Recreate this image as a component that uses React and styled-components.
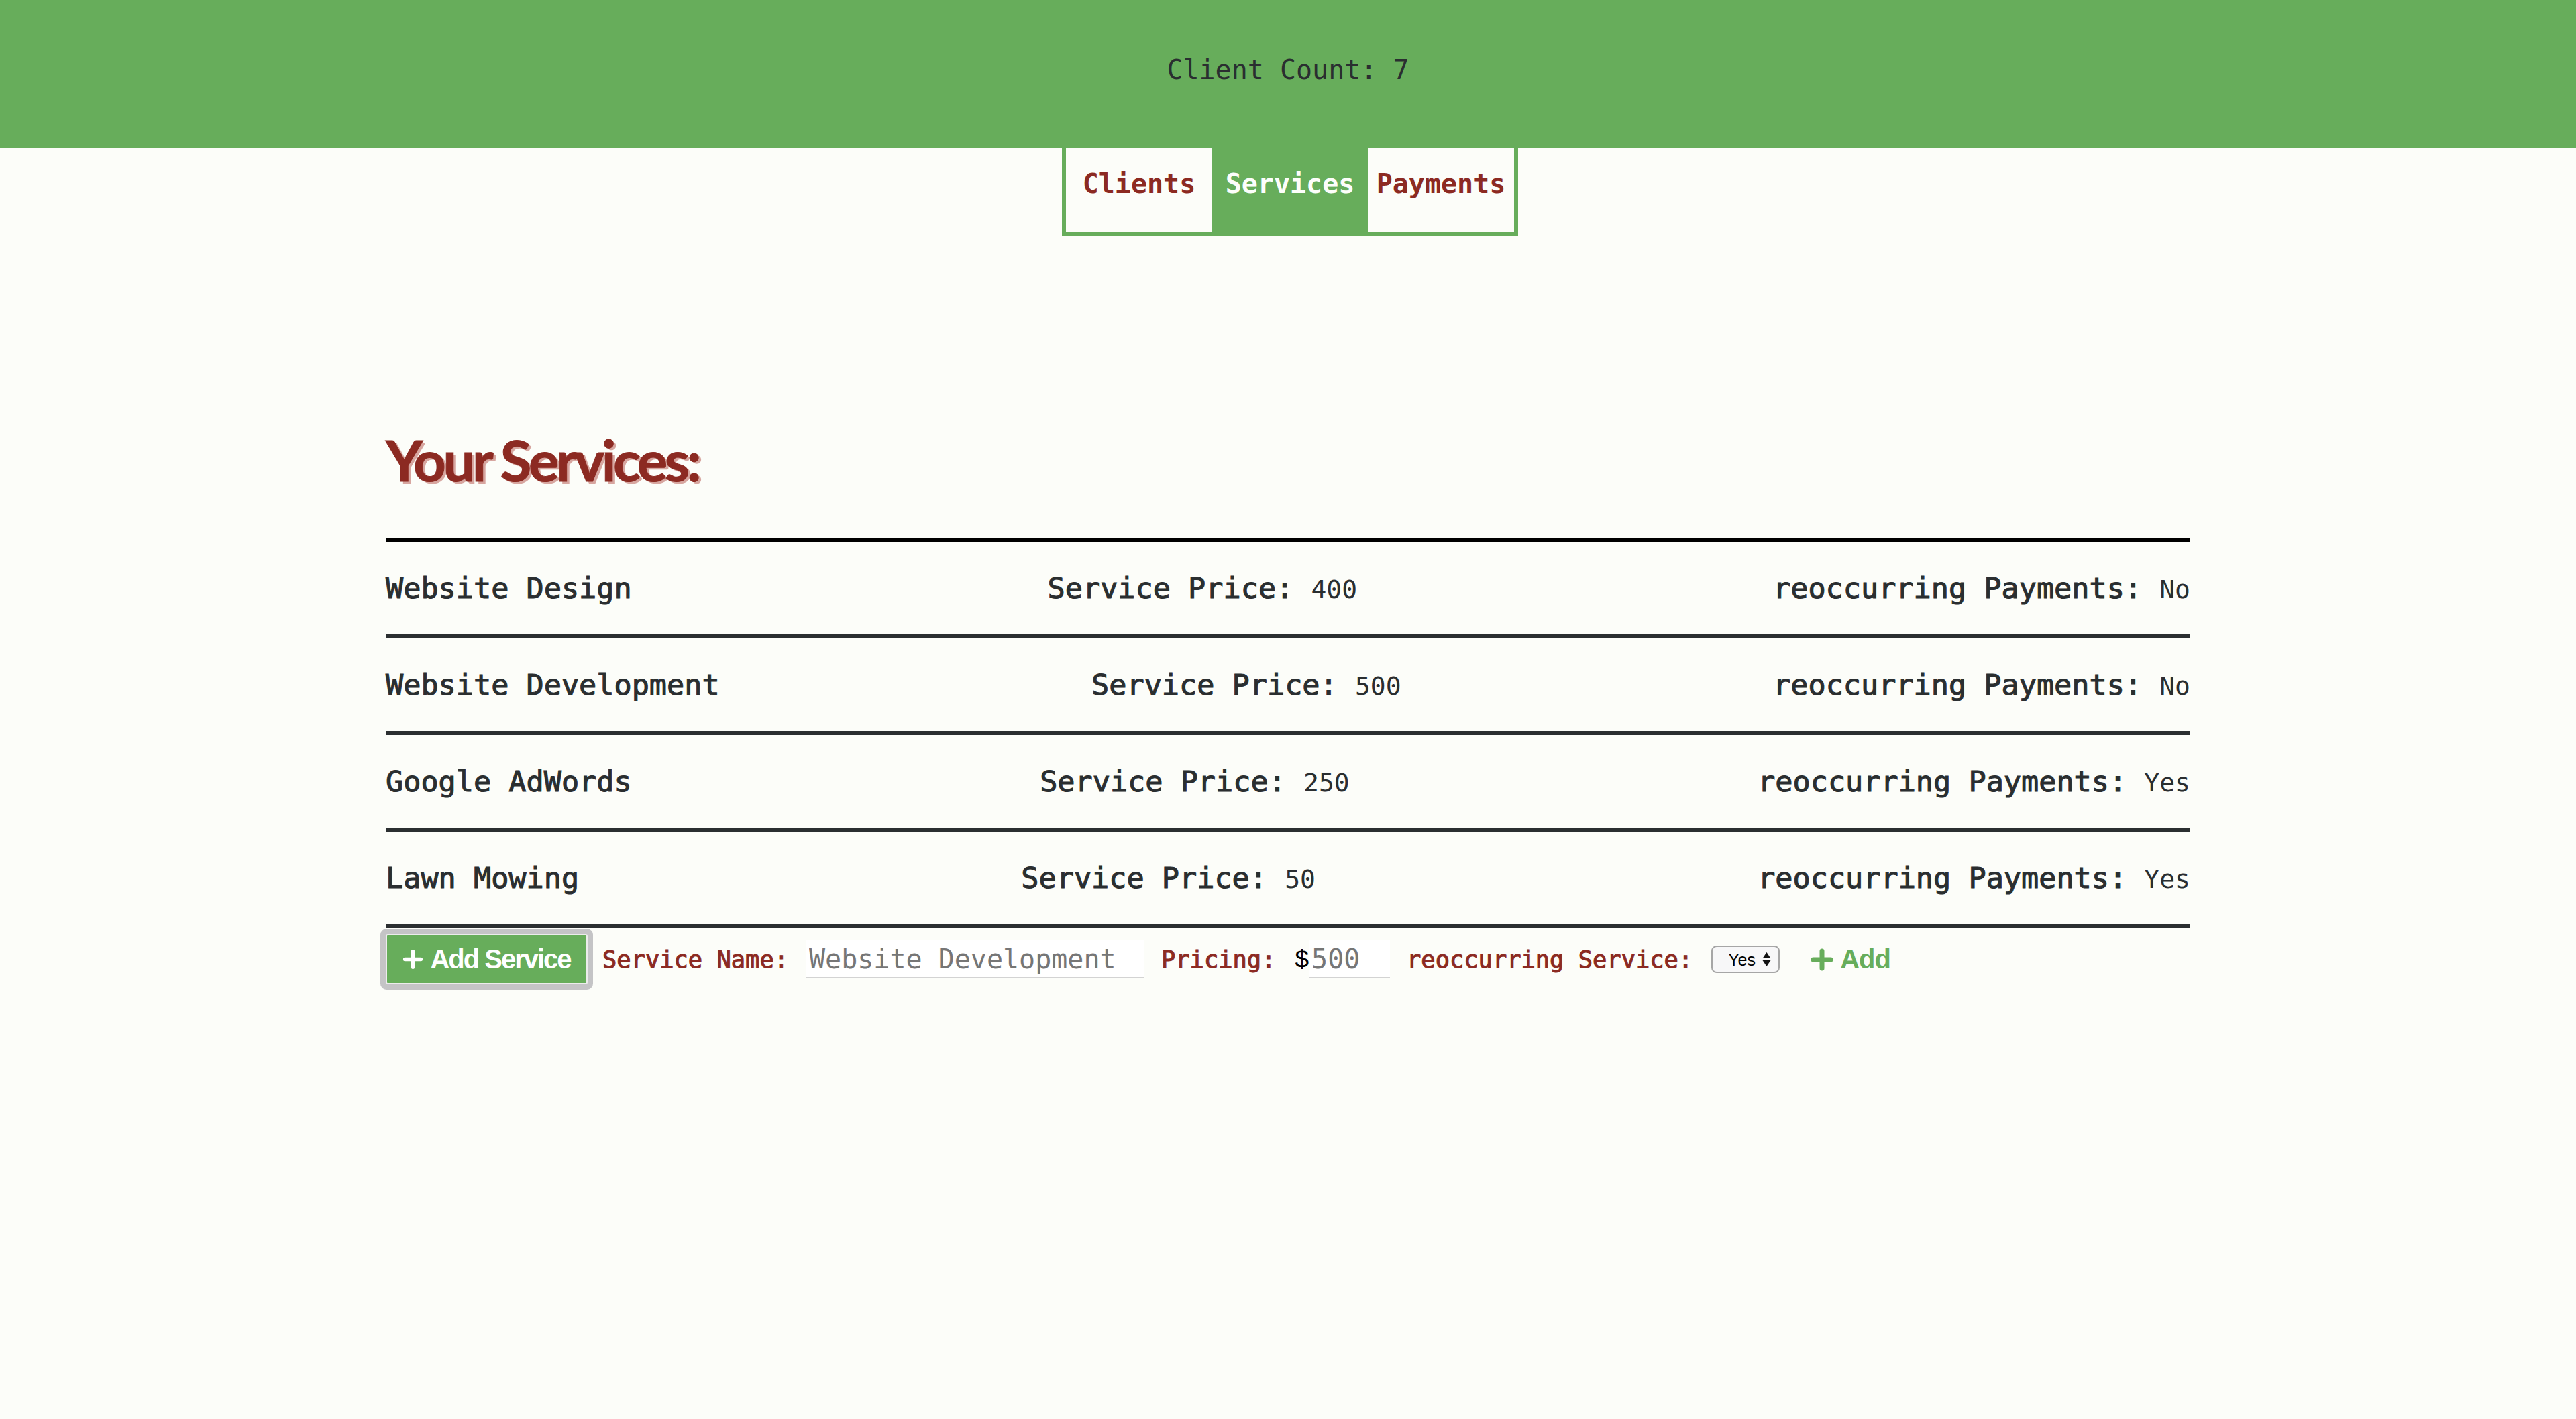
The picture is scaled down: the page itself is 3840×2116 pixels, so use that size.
import React from "react";
import styled, { createGlobalStyle } from "styled-components";

const GREEN = "#67ad5b";
const RED = "#8c2a22";
const INK = "#2a2e30";

const GlobalStyle = createGlobalStyle`
  html, body {
    margin: 0;
    padding: 0;
    background: #fcfdf9;
  }
  body {
    font-family: "DejaVu Sans Mono", "Liberation Mono", monospace;
    color: ${INK};
  }
  #root {
    min-height: 100vh;
  }
`;

const services = [
  { name: "Website Design", price: 400, recurring: "No" },
  { name: "Website Development", price: 500, recurring: "No" },
  { name: "Google AdWords", price: 250, recurring: "Yes" },
  { name: "Lawn Mowing", price: 50, recurring: "Yes" },
];

const tabs = [
  { label: "Clients", width: 218 },
  { label: "Services", width: 232, active: true },
  { label: "Payments", width: 218 },
];

const PlusIcon = ({ size, stroke }) => (
  <svg width={size} height={size} viewBox="0 0 34 34">
    <path
      d="M17 4 V30 M4 17 H30"
      stroke="currentColor"
      strokeWidth={stroke}
      strokeLinecap="round"
      fill="none"
    />
  </svg>
);

const App = () => {
  return (
    <>
      <GlobalStyle />
      <Header>
        Client Count: <span>7</span>
      </Header>
      <Nav>
        <TabBox>
          {tabs.map((t) => (
            <Tab key={t.label} $width={t.width} $active={t.active}>
              {t.label}
            </Tab>
          ))}
        </TabBox>
      </Nav>

      <Main>
        <Title>Your Services:</Title>
        <List>
          {services.map((s) => (
            <Row key={s.name}>
              <Label>{s.name}</Label>
              <span>
                <Label>Service Price: </Label>
                <Value>{s.price}</Value>
              </span>
              <span>
                <Label>reoccurring Payments: </Label>
                <Value>{s.recurring}</Value>
              </span>
            </Row>
          ))}
        </List>

        <Form>
          <AddServiceBtn type="button">
            <PlusIcon size={31} stroke={6} />
            Add Service
          </AddServiceBtn>
          <FormLabel $space={-3}>Service Name:</FormLabel>
          <TextInput
            $width={504}
            $space={2}
            placeholder="Website Development"
          />
          <FormLabel>Pricing:</FormLabel>
          <Dollar>$</Dollar>
          <TextInput $width={121} $space={-25} placeholder="500" />
          <FormLabel>reoccurring Service:</FormLabel>
          <SelectWrap>
            <Select defaultValue="Yes">
              <option>Yes</option>
              <option>No</option>
            </Select>
            <Arrows width="13" height="23" viewBox="0 0 13 23">
              <path d="M6.5 1 L12.5 10 H0.5 Z" fill="#111" />
              <path d="M6.5 22 L12.5 13 H0.5 Z" fill="#111" />
            </Arrows>
          </SelectWrap>
          <AddLink type="button">
            <PlusIcon size={34} stroke={7} />
            Add
          </AddLink>
        </Form>
      </Main>
    </>
  );
};

const Header = styled.header`
  height: 220px;
  box-sizing: border-box;
  padding-top: 81px;
  background: ${GREEN};
  text-align: center;
  font-size: 40px;
  line-height: normal;
  color: ${INK};
`;

const Nav = styled.nav`
  display: flex;
  justify-content: center;
  padding-left: 6px;
`;

const TabBox = styled.div`
  display: flex;
  border: 6px solid ${GREEN};
  border-top: none;
`;

const Tab = styled.div`
  width: ${(p) => p.$width}px;
  height: 126px;
  box-sizing: border-box;
  padding-top: 31px;
  text-align: center;
  font-size: 40px;
  font-weight: 700;
  line-height: normal;
  color: ${(p) => (p.$active ? "#fdfefb" : RED)};
  background: ${(p) => (p.$active ? GREEN : "transparent")};
`;

const Main = styled.main`
  width: 2690px;
  margin: 0 auto;
`;

const Title = styled.h1`
  margin: 283px 0 67px;
  font-family: Lato, "Open Sans", sans-serif;
  font-weight: 700;
  font-size: 85px;
  line-height: 100px;
  letter-spacing: -4.4px;
  color: ${RED};
  -webkit-text-stroke: 1px ${RED};
  text-shadow: 4px 3px 0 rgba(170, 60, 50, 0.45);
`;

const List = styled.div`
  border-top: 6px solid #000;
`;

const Row = styled.div`
  height: 138px;
  display: flex;
  align-items: center;
  justify-content: space-between;
  border-bottom: 6px solid #2b2f31;
`;

const Label = styled.span`
  font-size: 43.5px;
  -webkit-text-stroke: 1.1px ${INK};
  white-space: pre;
`;

const Value = styled.span`
  font-size: 38px;
`;

const Form = styled.div`
  display: flex;
  align-items: center;
  gap: 25px;
  margin-top: 9px;
`;

const AddServiceBtn = styled.button`
  width: 301px;
  height: 75px;
  box-sizing: border-box;
  display: flex;
  align-items: center;
  justify-content: center;
  gap: 10px;
  padding: 0;
  border: 2px solid #ececec;
  border-radius: 3px;
  box-shadow: 0 0 0 8px #c4c4c6;
  background: ${GREEN};
  color: #fff;
  font-family: "Liberation Sans", Arial, sans-serif;
  font-weight: 700;
  font-size: 40px;
  letter-spacing: -2px;
  cursor: pointer;
`;

const FormLabel = styled.label`
  margin-left: ${(p) => p.$space || 0}px;
  font-size: 35.4px;
  color: ${RED};
  -webkit-text-stroke: 1.1px ${RED};
  white-space: nowrap;
`;

const TextInput = styled.input`
  width: ${(p) => p.$width}px;
  height: 57px;
  box-sizing: border-box;
  margin-left: ${(p) => p.$space || 0}px;
  padding: 0 0 0 4px;
  border: none;
  border-bottom: 2px solid #d3d3d3;
  background: #fff;
  font-family: "DejaVu Sans Mono", "Liberation Mono", monospace;
  font-size: 40px;
  color: ${INK};
  outline: none;
  &::placeholder {
    color: #767676;
  }
`;

const Dollar = styled.span`
  margin-left: 4px;
  font-family: "Liberation Sans", Arial, sans-serif;
  font-size: 37px;
  color: #000;
`;

const SelectWrap = styled.div`
  position: relative;
  display: flex;
  margin-left: 3px;
`;

const Select = styled.select`
  appearance: none;
  width: 102px;
  height: 41px;
  box-sizing: border-box;
  padding: 0 0 0 23px;
  border: 2px solid #a6a6a6;
  border-radius: 8px;
  background: #f7f7f8;
  font-family: "Liberation Sans", Arial, sans-serif;
  font-size: 25px;
  color: #000;
`;

const Arrows = styled.svg`
  position: absolute;
  right: 13px;
  top: 9px;
  pointer-events: none;
`;

const AddLink = styled.button`
  display: flex;
  align-items: center;
  gap: 10px;
  margin-left: 21px;
  padding: 0;
  border: none;
  background: none;
  color: ${GREEN};
  font-family: "Liberation Sans", Arial, sans-serif;
  font-weight: 700;
  font-size: 40px;
  letter-spacing: -1px;
  cursor: pointer;
`;

export default App;
